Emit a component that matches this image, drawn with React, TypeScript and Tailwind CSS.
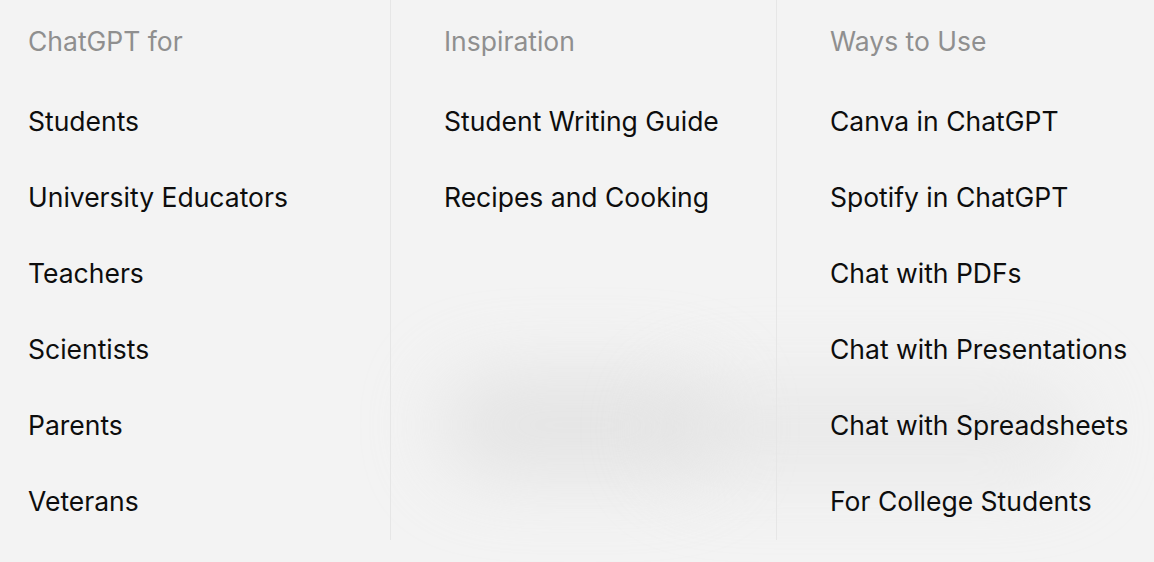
import React from 'react';

const columns = [
  {
    title: 'ChatGPT for',
    links: ['Students', 'University Educators', 'Teachers', 'Scientists', 'Parents', 'Veterans'],
  },
  {
    title: 'Inspiration',
    links: ['Student Writing Guide', 'Recipes and Cooking'],
  },
  {
    title: 'Ways to Use',
    links: [
      'Canva in ChatGPT',
      'Spotify in ChatGPT',
      'Chat with PDFs',
      'Chat with Presentations',
      'Chat with Spreadsheets',
      'For College Students',
    ],
  },
];

const colClass = [
  'w-[391px] pl-[28px] border-r border-[#e6e6e6]',
  'w-[386px] pl-[53px] border-r border-[#e6e6e6]',
  'flex-1 pl-[53px]',
];

export default function App() {
  return (
    <div
      className="relative w-[1154px] h-[562px] overflow-hidden bg-[#f3f3f3] text-[26.5px]"
      style={{ fontFamily: 'Inter, "Noto Sans", sans-serif' }}
    >
      {/* soft shadow blob behind the middle column */}
      <div className="pointer-events-none absolute left-[440px] top-[375px] w-[280px] h-[100px] rounded-full bg-[#d9d9d9] opacity-60 blur-[40px]" />
      <div className="pointer-events-none absolute left-[660px] top-[385px] w-[420px] h-[90px] rounded-full bg-[#dedede] opacity-50 blur-[40px]" />

      <div className="relative flex h-[540px]">
        {columns.map((col, i) => (
          <div key={col.title} className={colClass[i]}>
            <div className="h-[84px] flex items-center text-[#8f8f8f]">{col.title}</div>
            {col.links.map((link) => (
              <div key={link} className="h-[76px] flex items-center text-[#0d0d0d] whitespace-nowrap">
                {link}
              </div>
            ))}
          </div>
        ))}
      </div>
    </div>
  );
}
